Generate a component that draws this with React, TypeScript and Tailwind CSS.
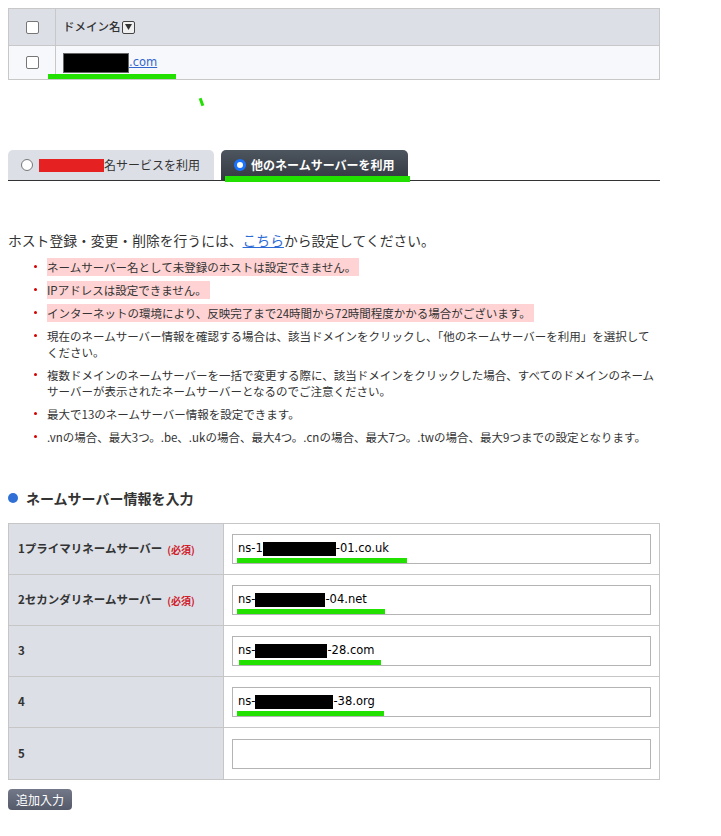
import React from "react";

const jp = { fontFamily: '"Noto Sans CJK JP", "Noto Sans", sans-serif' };

function Checkbox() {
  return <span className="inline-block w-[13px] h-[13px] rounded-[2px] border border-[#767676] bg-white" />;
}

function Bullet({ children }: { children: React.ReactNode }) {
  return (
    <li className="flex items-start">
      <span className="mt-[6px] mr-[10px] block w-[3px] h-[3px] rounded-full bg-[#d40000] shrink-0" />
      <span className="block">{children}</span>
    </li>
  );
}

function Hl({ children }: { children: React.ReactNode }) {
  return <span className="bg-[#ffd3d3] pr-[3px] py-[1px]">{children}</span>;
}

type Row = { label: string; req?: boolean; pre?: string; box?: number; post?: string; green?: number; gx?: number };

const rows: Row[] = [
  { label: "1プライマリネームサーバー", req: true, pre: "ns-1", box: 73, post: "-01.co.uk", green: 170, gx: 4 },
  { label: "2セカンダリネームサーバー", req: true, pre: "ns-", box: 70, post: "-04.net", green: 148, gx: 4 },
  { label: "3", pre: "ns-", box: 72, post: "-28.com", green: 142, gx: 6 },
  { label: "4", pre: "ns-", box: 78, post: "-38.org", green: 147, gx: 4 },
  { label: "5" },
];

export default function App() {
  return (
    <div className="relative w-[721px] h-[836px] bg-white text-[#333] px-2 pt-2" style={jp}>
      {/* domain table */}
      <div className="relative w-[652px] border border-[#c8c8c8]">
        <div className="flex h-[37px] bg-[#dcdfe6] border-b border-[#c8c8c8]">
          <div className="w-[47px] border-r border-[#c8c8c8] flex items-center justify-center">
            <Checkbox />
          </div>
          <div className="flex items-center pl-[7px] text-[11.5px] font-medium">
            ドメイン名
            <span className="ml-[1px] inline-flex items-center justify-center w-[13px] h-[13px] rounded-[2px] border border-[#444] bg-[#f0f0f0]">
              <svg width="7" height="6" viewBox="0 0 7 6"><path d="M0 0h7L3.5 6z" fill="#333" /></svg>
            </span>
          </div>
        </div>
        <div className="flex h-[33px] bg-[#f7f8fc]">
          <div className="w-[47px] border-r border-[#c8c8c8] flex items-center justify-center">
            <Checkbox />
          </div>
          <div className="flex items-center pl-[7px]">
            <span className="inline-block w-[66px] h-[20px] bg-black border border-[#666]" />
            <a className="text-[12px] text-[#3366cc] underline" style={{ fontFamily: '"DejaVu Sans", sans-serif', fontSize: 11.5 }}>.com</a>
          </div>
        </div>
        <div className="absolute left-[39px] top-[65px] w-[128px] h-[5px] bg-[#22e000]" />
      </div>
      <div className="absolute left-[200px] top-[98px] w-[3px] h-[8px] bg-[#22e000] -rotate-[20deg]" />

      {/* tabs */}
      <div className="relative mt-[70px] w-[652px] flex gap-[7px] border-b border-[#333]">
        <div className="w-[206px] h-[30px] rounded-t-[5px] bg-[#dcdfe6] flex items-center pl-[13px] text-[12px]">
          <span className="inline-block w-[12px] h-[12px] rounded-full border border-[#777] bg-white" />
          <span className="ml-[6px] inline-block w-[65px] h-[13px] bg-[#e52121]" />
          <span>名サービスを利用</span>
        </div>
        <div className="w-[187px] h-[30px] rounded-t-[5px] bg-gradient-to-b from-[#4d555e] to-[#343a42] flex items-center pl-[13px] text-[12px] font-bold text-white">
          <span className="inline-block w-[12px] h-[12px] rounded-full border-[3px] border-[#1a73ff] bg-white" />
          <span className="ml-[5px]">他のネームサーバーを利用</span>
        </div>
        <div className="absolute left-[217px] top-[26px] w-[185px] h-[6px] bg-[#22e000]" />
      </div>

      {/* intro */}
      <p className="mt-[49px] text-[13.8px] leading-[20px]">
        ホスト登録・変更・削除を行うには、<a className="text-[#2d6bd6] underline">こちら</a>から設定してください。
      </p>
      <ul className="mt-[9px] pl-[26px] flex flex-col gap-[7px] text-[11.5px] leading-[16px] w-[652px]">
        <Bullet><Hl>ネームサーバー名として未登録のホストは設定できません。</Hl></Bullet>
        <Bullet><Hl>IPアドレスは設定できません。</Hl></Bullet>
        <Bullet><Hl>インターネットの環境により、反映完了まで24時間から72時間程度かかる場合がございます。</Hl></Bullet>
        <Bullet>現在のネームサーバー情報を確認する場合は、該当ドメインをクリックし、「他のネームサーバーを利用」を選択してください。</Bullet>
        <Bullet>複数ドメインのネームサーバーを一括で変更する際に、該当ドメインをクリックした場合、すべてのドメインのネームサーバーが表示されたネームサーバーとなるのでご注意ください。</Bullet>
        <Bullet>最大で13のネームサーバー情報を設定できます。</Bullet>
        <Bullet>.vnの場合、最大3つ。.be、.ukの場合、最大4つ。.cnの場合、最大7つ。.twの場合、最大9つまでの設定となります。</Bullet>
      </ul>

      {/* heading */}
      <div className="mt-[43px] flex items-center h-[20px]">
        <span className="inline-block w-[10px] h-[10px] rounded-full bg-[#2f6fd6]" />
        <span className="ml-[8px] text-[14px] font-bold">ネームサーバー情報を入力</span>
      </div>

      {/* ns table */}
      <div className="mt-[15px] w-[652px] border border-[#c6c6c6]">
        {rows.map((r, i) => (
          <div key={i} className={`flex h-[51px] ${i < rows.length - 1 ? "border-b border-[#c6c6c6]" : "h-[50px]"}`}>
            <div className="w-[215px] bg-[#dcdfe6] border-r border-[#c6c6c6] flex items-center pl-[9px] text-[11.5px] font-bold">
              {r.label}
              {r.req && <span className="ml-[5px] text-[10px] text-[#d0202a] font-bold">(必須)</span>}
            </div>
            <div className="flex-1 flex items-center pl-[8px] pr-[8px]">
              <div className="relative w-full h-[30px] border border-[#b4b4b4] bg-white flex items-center pl-[5px] text-[12px] text-black" style={{ fontFamily: '"DejaVu Sans", Verdana, sans-serif', fontSize: 11.5 }}>
                {r.pre && (
                  <>
                    <span>{r.pre}</span>
                    <span className="inline-block h-[14px] bg-black" style={{ width: r.box }} />
                    <span>{r.post}</span>
                    <span className="absolute top-[23px] h-[5px] bg-[#22e000]" style={{ left: r.gx, width: r.green }} />
                  </>
                )}
              </div>
            </div>
          </div>
        ))}
      </div>

      <button className="mt-[9px] w-[64px] h-[21px] rounded-[4px] bg-gradient-to-b from-[#737989] to-[#545a69] text-white text-[12px] flex items-center justify-center" style={jp}>
        追加入力
      </button>
    </div>
  );
}
